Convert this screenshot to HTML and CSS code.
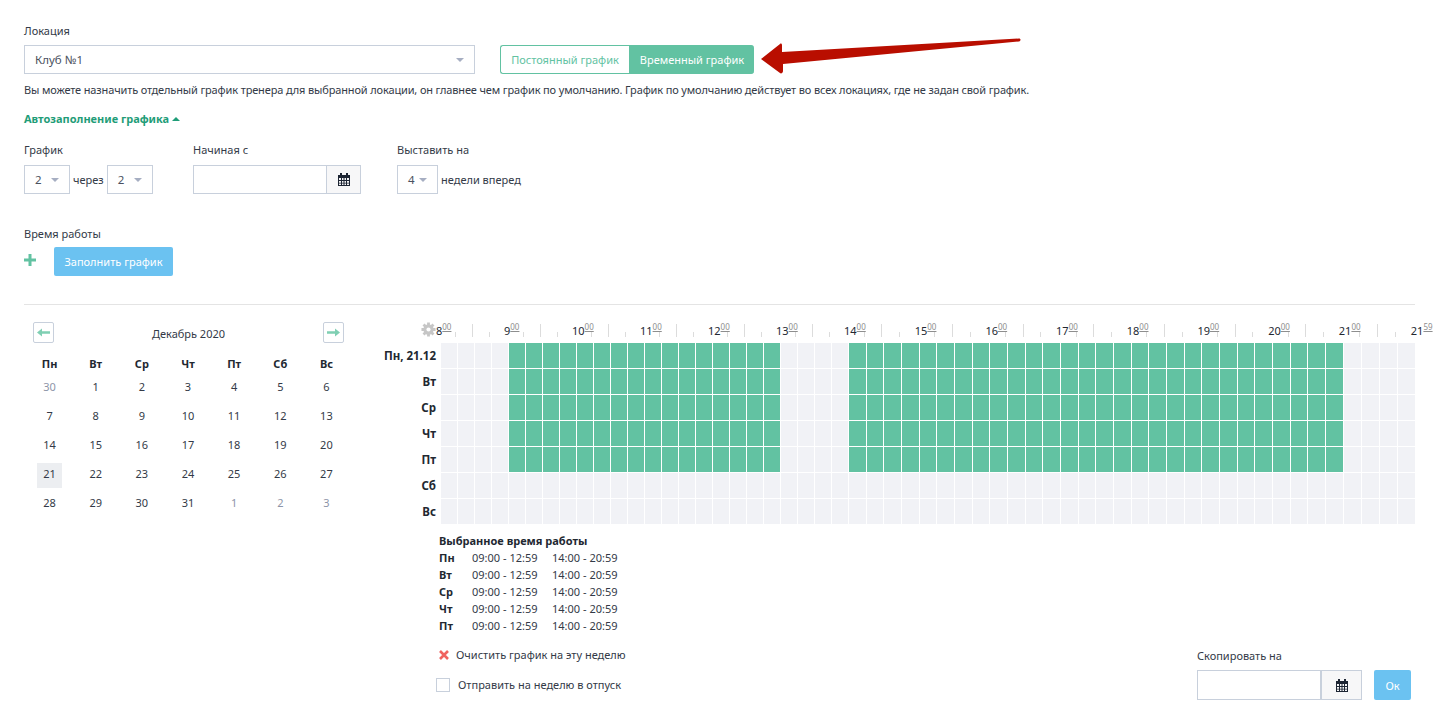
FILE: index.html
```html
<!DOCTYPE html>
<html lang="ru">
<head>
  <meta charset="UTF-8">
  <meta name="viewport" content="width=device-width, initial-scale=1.0">
  <title>График тренера</title>
  <link rel="stylesheet" href="styles.css">
</head>
<body>

  <div class="page">
    <div class="field-label">Локация</div>
    <div class="location-row">
      <div class="select select-wide">Клуб №1<span class="caret"></span></div>
      <div class="toggle">
        <button class="toggle-btn" type="button">Постоянный график</button>
        <button class="toggle-btn active" type="button">Временный график</button>
      </div>
    </div>

    <!-- стрелка поверх страницы -->
    <svg class="red-arrow" width="270" height="40" viewBox="0 0 270 40">
      <path d="M1 21 L20 6 C21 5 22 6 22 7 L22 14 L259 0.5 C261 0.5 261 3 259 3.5 L23 26 L23 33 C23 35 21 36 20 35 Z" fill="#b90e00"/>
    </svg>

    <p class="hint">Вы можете назначить отдельный график тренера для выбранной локации, он главнее чем график по умолчанию. График по умолчанию действует во всех локациях, где не задан свой график.</p>

    <div class="autofill-link">Автозаполнение графика <span class="caret-up"></span></div>

    <div class="auto-fields">
      <div class="auto-col col-shift">
        <div class="field-label">График</div>
        <div class="inline-row">
          <div class="select select-small">2<span class="caret"></span></div>
          <span class="inline-text">через</span>
          <div class="select select-small">2<span class="caret"></span></div>
        </div>
      </div>
      <div class="auto-col col-start">
        <div class="field-label">Начиная с</div>
        <div class="date-input">
          <div class="date-value"></div>
          <div class="date-btn">
            <svg width="12" height="13" viewBox="0 0 12 13"><use href="#icon-calendar"/></svg>
          </div>
        </div>
      </div>
      <div class="auto-col">
        <div class="field-label">Выставить на</div>
        <div class="inline-row">
          <div class="select select-weeks">4<span class="caret"></span></div>
          <span class="inline-text">недели вперед</span>
        </div>
      </div>
    </div>

    <div class="field-label work-label">Время работы</div>
    <div class="work-row">
      <svg class="plus" width="12" height="12" viewBox="0 0 12 12"><path d="M4.5 0h3v4.500H12v3H7.500V12h-3V7.500H0v-3h4.500z" fill="#62c2a2"/></svg>
      <button class="btn-blue btn-fill" type="button">Заполнить график</button>
    </div>

    <hr class="divider">

    <div class="schedule">
      <div class="calendar">
        <div class="cal-head">
          <button class="cal-nav" type="button">
            <svg width="13" height="9" viewBox="0 0 13 9"><path d="M0 4.500 L5 0.500 V3.200 H13 V5.800 H5 V8.500 Z" fill="#7fcfb3"/></svg>
          </button>
          <div class="cal-title">Декабрь 2020</div>
          <button class="cal-nav" type="button">
            <svg width="13" height="9" viewBox="0 0 13 9"><path d="M13 4.500 L8 0.500 V3.200 H0 V5.800 H8 V8.500 Z" fill="#7fcfb3"/></svg>
          </button>
        </div>
        <div class="cal-grid cal-weekdays">
          <div>Пн</div><div>Вт</div><div>Ср</div><div>Чт</div><div>Пт</div><div>Сб</div><div>Вс</div>
        </div>
        <div class="cal-grid cal-days">
          <div class="muted">30</div><div>1</div><div>2</div><div>3</div><div>4</div><div>5</div><div>6</div>
          <div>7</div><div>8</div><div>9</div><div>10</div><div>11</div><div>12</div><div>13</div>
          <div>14</div><div>15</div><div>16</div><div>17</div><div>18</div><div>19</div><div>20</div>
          <div><span class="today">21</span></div><div>22</div><div>23</div><div>24</div><div>25</div><div>26</div><div>27</div>
          <div>28</div><div>29</div><div>30</div><div>31</div><div class="muted">1</div><div class="muted">2</div><div class="muted">3</div>
        </div>
      </div>

      <div class="week">
        <div class="week-head">
          <div class="corner">
            <svg width="15" height="15" viewBox="0 0 16 16">
              <g stroke="#c6c6c6" stroke-width="3">
                <path d="M8 0.500V15.500M0.500 8H15.500M2.700 2.700L13.300 13.300M13.300 2.700L2.700 13.300"/>
              </g>
              <circle cx="8" cy="8" r="4" fill="none" stroke="#c6c6c6" stroke-width="3"/>
              <circle cx="8" cy="8" r="2.200" fill="#fff"/>
            </svg>
          </div>
          <div class="slots timeline" id="timeline"></div>
        </div>
        <div id="week-rows"></div>

        <div class="summary">
          <div class="summary-title">Выбранное время работы</div>
          <div class="summary-row"><b>Пн</b><span>09:00 - 12:59</span><span>14:00 - 20:59</span></div>
          <div class="summary-row"><b>Вт</b><span>09:00 - 12:59</span><span>14:00 - 20:59</span></div>
          <div class="summary-row"><b>Ср</b><span>09:00 - 12:59</span><span>14:00 - 20:59</span></div>
          <div class="summary-row"><b>Чт</b><span>09:00 - 12:59</span><span>14:00 - 20:59</span></div>
          <div class="summary-row"><b>Пт</b><span>09:00 - 12:59</span><span>14:00 - 20:59</span></div>
        </div>

        <div class="week-footer">
          <div class="week-actions">
            <div class="clear-link">
              <svg width="10" height="10" viewBox="0 0 10 10"><path d="M1 1L9 9M9 1L1 9" stroke="#f0625f" stroke-width="2.600"/></svg>
              Очистить график на эту неделю
            </div>
            <label class="vacation"><span class="checkbox"></span>Отправить на неделю в отпуск</label>
          </div>
          <div class="copy-box">
            <div class="field-label">Скопировать на</div>
            <div class="copy-row">
              <div class="date-input date-copy">
                <div class="date-value"></div>
                <div class="date-btn">
                  <svg width="12" height="13" viewBox="0 0 12 13"><use href="#icon-calendar"/></svg>
                </div>
              </div>
              <button class="btn-blue btn-ok" type="button">Ок</button>
            </div>
          </div>
        </div>
      </div>
    </div>
  </div>

  <svg class="icon-defs" width="0" height="0">
    <symbol id="icon-calendar" viewBox="0 0 12 13">
      <path fill="#1d2533" fill-rule="evenodd" d="M2 0h2v2h4V0h2v2h2v11H0V2h2zM1 5v2h2V5zm3 0v2h1.500V5zm2.500 0v2H8V5zM9 5v2h2V5zM1 8v1.700h2V8zm3 0v1.700h1.500V8zm2.500 0v1.700H8V8zM9 8v1.700h2V8zM1 10.500V12h2v-1.500zm3 0V12h1.500v-1.500zm2.500 0V12H8v-1.500zm2.500 0V12h2v-1.500z"/>
    </symbol>
  </svg>

  <script src="script.js"></script>
</body>
</html>
```

FILE: styles.css
```css
body {
  font-family: "Noto Sans", "Open Sans", sans-serif;
  font-size: 11px;
  color: #333a47;
  background-color: #fff;
  margin: 0;
}

.page {
  position: relative;
  padding: 23px 22px 0 24px;
}

.field-label {
  line-height: 16px;
}

.location-row {
  display: flex;
  gap: 25px;
  margin-top: 6px;
}

.select {
  display: flex;
  align-items: center;
  justify-content: space-between;
  box-sizing: border-box;
  height: 29px;
  padding: 0 10px;
  border: 1px solid #c8d0dc;
  font-size: 11.5px;
  color: #4a5160;
}

.select-wide {
  width: 451px;
}

.select-small {
  width: 46px;
}

.select-weeks {
  width: 41px;
}

.caret {
  width: 0;
  height: 0;
  border-left: 4px solid transparent;
  border-right: 4px solid transparent;
  border-top: 4px solid #a6aec2;
}

.toggle {
  display: flex;
  height: 29px;
}

.toggle-btn {
  font: inherit;
  width: 129px;
  padding: 0;
  color: #62c2a2;
  background-color: #fff;
  border: 1px solid #62c2a2;
  border-right: none;
  border-radius: 3px 0 0 3px;
}

.toggle-btn.active {
  width: 125px;
  color: #fff;
  background-color: #62c2a2;
  border-radius: 0 3px 3px 0;
}

.red-arrow {
  position: absolute;
  left: 760px;
  top: 38px;
}

.hint {
  margin: 8px 0 0;
  line-height: 16px;
  letter-spacing: -0.14px;
  color: #333a47;
}

.autofill-link {
  margin-top: 13px;
  line-height: 16px;
  font-weight: 700;
  color: #1f9d78;
}

.caret-up {
  display: inline-block;
  width: 0;
  height: 0;
  margin-bottom: 2px;
  border-left: 4px solid transparent;
  border-right: 4px solid transparent;
  border-bottom: 4px solid #1f9d78;
}

.auto-fields {
  display: flex;
  gap: 36px;
  margin-top: 15px;
}

.auto-col .field-label {
  margin-bottom: 7px;
}

.col-shift {
  width: 133px;
}

.col-start {
  width: 168px;
}

.inline-row {
  display: flex;
  align-items: center;
  gap: 3px;
}

.inline-text {
  white-space: nowrap;
}

.date-input {
  display: flex;
  box-sizing: border-box;
  height: 29px;
  border: 1px solid #c8d0dc;
}

.date-value {
  flex: 1;
}

.date-btn {
  display: flex;
  align-items: center;
  justify-content: center;
  width: 33px;
  background-color: #f7f7f8;
  border-left: 1px solid #c8d0dc;
}

.work-label {
  margin-top: 32px;
}

.work-row {
  display: flex;
  gap: 18px;
  margin-top: 5px;
}

.plus {
  margin-top: 7px;
}

.btn-blue {
  font: inherit;
  color: #fff;
  background-color: #6bc2f1;
  border: none;
  border-radius: 2px;
  padding: 0;
}

.btn-fill {
  width: 119px;
  height: 29px;
}

.divider {
  margin: 28px 0 0;
  border: none;
  border-top: 1px solid #e4e4e4;
}

.schedule {
  display: flex;
  justify-content: space-between;
  margin-top: 17px;
}

.calendar {
  width: 323px;
  margin-left: 2.5px;
}

.cal-head {
  display: flex;
  align-items: center;
  justify-content: space-between;
  padding: 0 5px 0 6px;
}

.cal-nav {
  display: flex;
  align-items: center;
  justify-content: center;
  box-sizing: border-box;
  width: 21px;
  height: 21px;
  padding: 0;
  background-color: #fff;
  border: 1px solid #c8d0dc;
  border-radius: 2px;
}

.cal-title {
  margin-top: 2px;
  color: #333a47;
}

.cal-grid {
  display: grid;
  grid-template-columns: repeat(7, 1fr);
  text-align: center;
}

.cal-weekdays {
  margin-top: 12px;
  line-height: 18px;
  font-weight: 700;
  color: #222831;
}

.cal-days {
  margin-top: 1px;
}

.cal-days > div {
  display: flex;
  align-items: flex-start;
  justify-content: center;
  box-sizing: border-box;
  height: 29px;
  padding-top: 2px;
  line-height: 21px;
  color: #333a47;
}

.cal-days > .muted {
  color: #8d95a8;
}

.today {
  display: block;
  width: 25px;
  height: 25px;
  background-color: #eceef1;
}

.week {
  width: 1035px;
}

.week-head {
  display: flex;
  height: 21px;
}

.corner {
  flex-shrink: 0;
  box-sizing: border-box;
  width: 61px;
  padding-left: 41px;
}

.slots {
  display: grid;
  grid-template-columns: repeat(24, 17px) repeat(28, 17.68px) repeat(4, 18px);
}

.timeline {
  grid-auto-flow: column;
  grid-auto-columns: 0;
}

.tick-cell {
  position: relative;
  display: flex;
  align-items: flex-end;
  justify-content: flex-end;
  padding: 0 2px 6px 0;
}

.tick-cell::after {
  content: "";
  width: 1px;
  background-color: #dcdcdc;
}

.tick-short::after {
  height: 5px;
}

.tick-long::after {
  height: 13px;
}

.tick-none {
  padding: 0;
}

.tick-none::after {
  display: none;
}

.hour {
  position: absolute;
  left: -5px;
  bottom: 5px;
  line-height: 14px;
  white-space: nowrap;
  color: #222831;
}

.hour sup {
  font-size: 8px;
  line-height: 0;
  vertical-align: 5px;
  color: #8e8e8e;
  text-decoration: underline;
}

.week-row {
  display: flex;
}

.week-day {
  flex-shrink: 0;
  box-sizing: border-box;
  width: 61px;
  padding-right: 5px;
  line-height: 26px;
  font-size: 11.5px;
  font-weight: 700;
  text-align: right;
  white-space: nowrap;
  color: #222831;
}

.slot {
  height: 25px;
  background-color: #f1f2f6;
  border-right: 1px solid #fff;
  border-bottom: 1px solid #fff;
}

.slot.on {
  background-color: #62c2a2;
}

.summary {
  margin: 7px 0 0 59px;
}

.summary-title {
  line-height: 17px;
  font-weight: 700;
  color: #222831;
}

.summary-row {
  display: flex;
  line-height: 17px;
}

.summary-row b {
  width: 33px;
  color: #222831;
}

.summary-row span {
  width: 80px;
}

.week-footer {
  display: flex;
  align-items: flex-end;
  justify-content: space-between;
  margin: 13px 4px 0 59px;
}

.week-actions {
  padding-bottom: 7px;
}

.clear-link {
  display: flex;
  align-items: center;
  gap: 7px;
  line-height: 16px;
}

.vacation {
  display: flex;
  align-items: center;
  gap: 8px;
  margin: 14px 0 0 -3px;
  line-height: 16px;
}

.checkbox {
  box-sizing: border-box;
  width: 14px;
  height: 14px;
  border: 1px solid #c8d0dc;
}

.copy-box .field-label {
  margin-bottom: 6px;
}

.copy-row {
  display: flex;
  gap: 12px;
}

.date-copy {
  width: 165px;
  height: 30px;
}

.date-copy .date-btn {
  width: 39px;
  border-left-width: 2px;
}

.btn-ok {
  width: 37px;
  height: 30px;
}

.icon-defs {
  position: absolute;
}
```

FILE: script.js
```js
// 8:00 - 22:00, по 15 минут в ячейке
const SLOTS = 56;
const DAYS = ['Пн, 21.12', 'Вт', 'Ср', 'Чт', 'Пт', 'Сб', 'Вс'];
const WORK_DAYS = 5;

function isWorking(day, slot) {
  if (day >= WORK_DAYS) return false;
  return (slot >= 4 && slot < 20) || (slot >= 24 && slot < 52);
}

// Шкала времени
const timeline = document.getElementById('timeline');
for (let i = 0; i < SLOTS; i++) {
  const cell = document.createElement('div');
  const kinds = ['tick-short', 'tick-long', 'tick-short', 'tick-none'];
  cell.className = 'tick-cell ' + kinds[i % 4];
  if (i % 4 === 0) {
    cell.innerHTML = `<span class="hour">${8 + i / 4}<sup>00</sup></span>`;
  }
  timeline.appendChild(cell);
}
const endCell = document.createElement('div');
endCell.className = 'tick-cell tick-none';
endCell.innerHTML = '<span class="hour">21<sup>59</sup></span>';
timeline.appendChild(endCell);

// Строки недели
const rows = document.getElementById('week-rows');
DAYS.forEach((name, day) => {
  const row = document.createElement('div');
  row.className = 'week-row';

  const label = document.createElement('div');
  label.className = 'week-day';
  label.textContent = name;
  row.appendChild(label);

  const slots = document.createElement('div');
  slots.className = 'slots';
  for (let i = 0; i < SLOTS; i++) {
    const slot = document.createElement('div');
    slot.className = isWorking(day, i) ? 'slot on' : 'slot';
    slots.appendChild(slot);
  }
  row.appendChild(slots);
  rows.appendChild(row);
});
```
